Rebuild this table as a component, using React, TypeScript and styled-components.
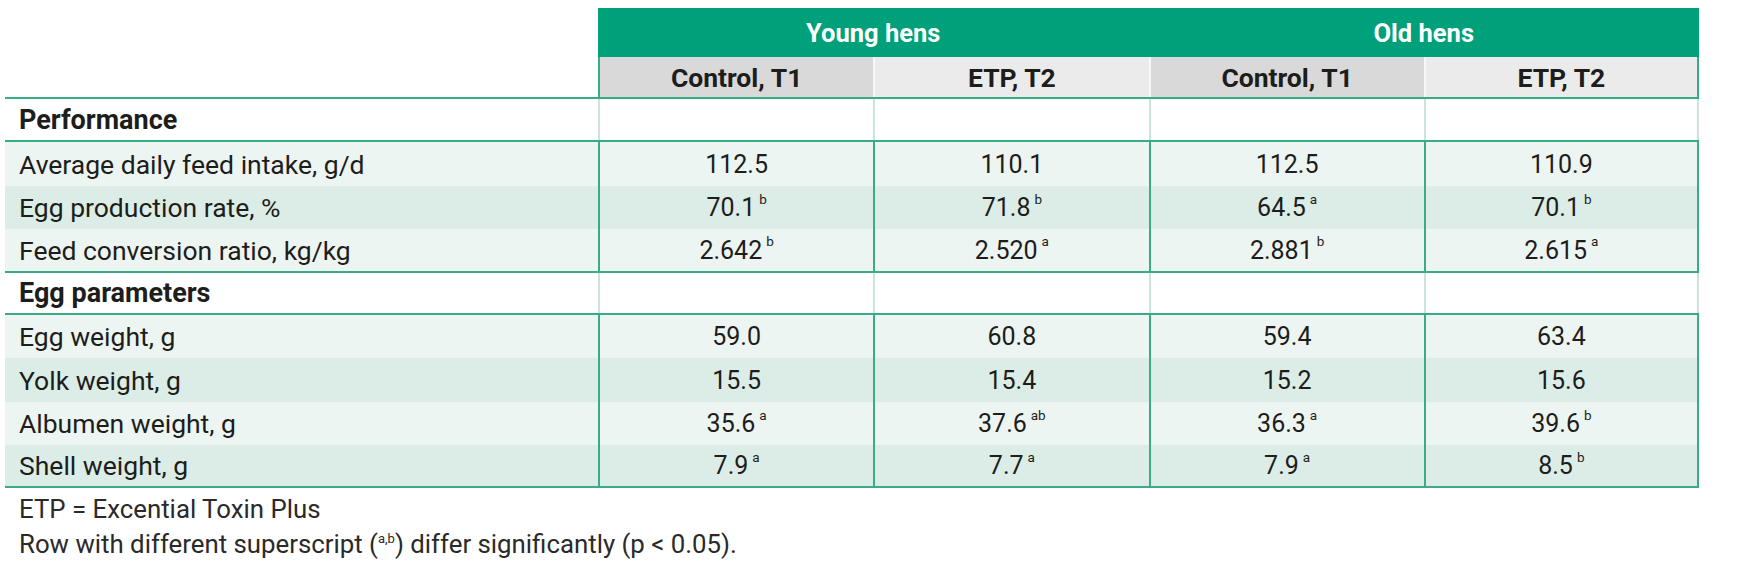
import React from "react";
import styled, { createGlobalStyle } from "styled-components";

const GREEN = "#00a07a";
const LINE = "#3aab88";
const FAINT = "#cbe3da";
const LIGHT = "#edf5f2";
const DARK = "#dbede6";

const Global = createGlobalStyle`
  html, body { margin: 0; padding: 0; background: #fff; }
  body { font-family: Roboto, "Liberation Sans", Arial, sans-serif; color: #1d1d1b; }
  * { box-sizing: border-box; }
`;

const Page = styled.div`
  padding: 8px 0 0 5px;
`;

const Table = styled.div`
  width: 1694px;
  display: flex;
  flex-direction: column;
`;

const Row = styled.div<{ $h: number; $bg?: string; $line?: boolean; $cols?: string }>`
  display: grid;
  grid-template-columns: ${(p) => p.$cols ?? "593px repeat(4, 1fr)"};
  height: ${(p) => p.$h}px;
  background: ${(p) => p.$bg ?? "transparent"};
  border-bottom: ${(p) => (p.$line ? `2px solid ${LINE}` : "none")};
`;

const Blank = styled.div``;

const GroupCell = styled.div`
  background: ${GREEN};
  color: #fff;
  font-weight: 700;
  font-size: 25.5px;
  display: flex;
  align-items: center;
  justify-content: center;
`;

const SubCell = styled.div<{ $tone: "dark" | "light"; $first?: boolean; $last?: boolean }>`
  background: ${(p) => (p.$tone === "dark" ? "#d9d9d9" : "#ebebeb")};
  font-weight: 700;
  font-size: 26.5px;
  display: flex;
  align-items: center;
  justify-content: center;
  border-left: 2px solid ${(p) => (p.$first ? LINE : "#f7f7f7")};
  border-right: ${(p) => (p.$last ? `2px solid ${LINE}` : "none")};
`;

const Label = styled.div<{ $bold?: boolean }>`
  display: flex;
  align-items: center;
  padding-left: 14px;
  font-size: ${(p) => (p.$bold ? 27 : 26.5)}px;
  font-weight: ${(p) => (p.$bold ? 700 : 400)};
`;

const Cell = styled.div<{ $faint?: boolean; $last?: boolean }>`
  display: flex;
  align-items: center;
  justify-content: center;
  font-size: 25px;
  border-left: 2px solid ${(p) => (p.$faint ? FAINT : LINE)};
  border-right: ${(p) => (p.$last ? `2px solid ${p.$faint ? FAINT : LINE}` : "none")};
`;

const Sup = styled.sup`
  font-size: 13.5px;
  line-height: 0;
  margin-left: 4px;
  position: relative;
  top: -3px;
`;

const Notes = styled.div`
  margin-top: 4px;
  padding-left: 14px;
  font-size: 25.8px;
  line-height: 35px;
  color: #2a2a2a;
`;

const NoteSup = styled.sup`
  font-size: 13px;
  line-height: 0;
`;

type V = [string, string?];
type DataRow = { label: string; values: V[]; h: number };

const performance: DataRow[] = [
  { label: "Average daily feed intake, g/d", values: [["112.5"], ["110.1"], ["112.5"], ["110.9"]], h: 44 },
  { label: "Egg production rate, %", values: [["70.1", "b"], ["71.8", "b"], ["64.5", "a"], ["70.1", "b"]], h: 43 },
  { label: "Feed conversion ratio, kg/kg", values: [["2.642", "b"], ["2.520", "a"], ["2.881", "b"], ["2.615", "a"]], h: 44 },
];

const eggs: DataRow[] = [
  { label: "Egg weight, g", values: [["59.0"], ["60.8"], ["59.4"], ["63.4"]], h: 43 },
  { label: "Yolk weight, g", values: [["15.5"], ["15.4"], ["15.2"], ["15.6"]], h: 44 },
  { label: "Albumen weight, g", values: [["35.6", "a"], ["37.6", "ab"], ["36.3", "a"], ["39.6", "b"]], h: 43 },
  { label: "Shell weight, g", values: [["7.9", "a"], ["7.7", "a"], ["7.9", "a"], ["8.5", "b"]], h: 43 },
];

const subHeads: { text: string; tone: "dark" | "light" }[] = [
  { text: "Control, T1", tone: "dark" },
  { text: "ETP, T2", tone: "light" },
  { text: "Control, T1", tone: "dark" },
  { text: "ETP, T2", tone: "light" },
];

function Section({ title, rows }: { title: string; rows: DataRow[] }) {
  return (
    <>
      <Row $h={title === "Performance" ? 43 : 42} $bg="#fff" $line>
        <Label $bold>{title}</Label>
        {[0, 1, 2, 3].map((i) => (
          <Cell key={i} $faint $last={i === 3} />
        ))}
      </Row>
      {rows.map((r, ri) => (
        <Row key={r.label} $h={r.h} $bg={ri % 2 === 0 ? LIGHT : DARK} $line={ri === rows.length - 1}>
          <Label>{r.label}</Label>
          {r.values.map(([v, s], i) => (
            <Cell key={i} $last={i === 3}>
              <span>
                {v}
                {s && <Sup>{s}</Sup>}
              </span>
            </Cell>
          ))}
        </Row>
      ))}
    </>
  );
}

export default function App() {
  return (
    <Page>
      <Global />
      <Table>
        <Row $h={49} $cols="593px 1fr 1fr">
          <Blank />
          <GroupCell>Young hens</GroupCell>
          <GroupCell>Old hens</GroupCell>
        </Row>
        <Row $h={42} $line>
          <Blank />
          {subHeads.map((h, i) => (
            <SubCell key={i} $tone={h.tone} $first={i === 0} $last={i === 3}>
              {h.text}
            </SubCell>
          ))}
        </Row>
        <Section title="Performance" rows={performance} />
        <Section title="Egg parameters" rows={eggs} />
      </Table>
      <Notes>
        <div>ETP = Excential Toxin Plus</div>
        <div>
          Row with different superscript (<NoteSup>a,b</NoteSup>) differ significantly (p &lt; 0.05).
        </div>
      </Notes>
    </Page>
  );
}
